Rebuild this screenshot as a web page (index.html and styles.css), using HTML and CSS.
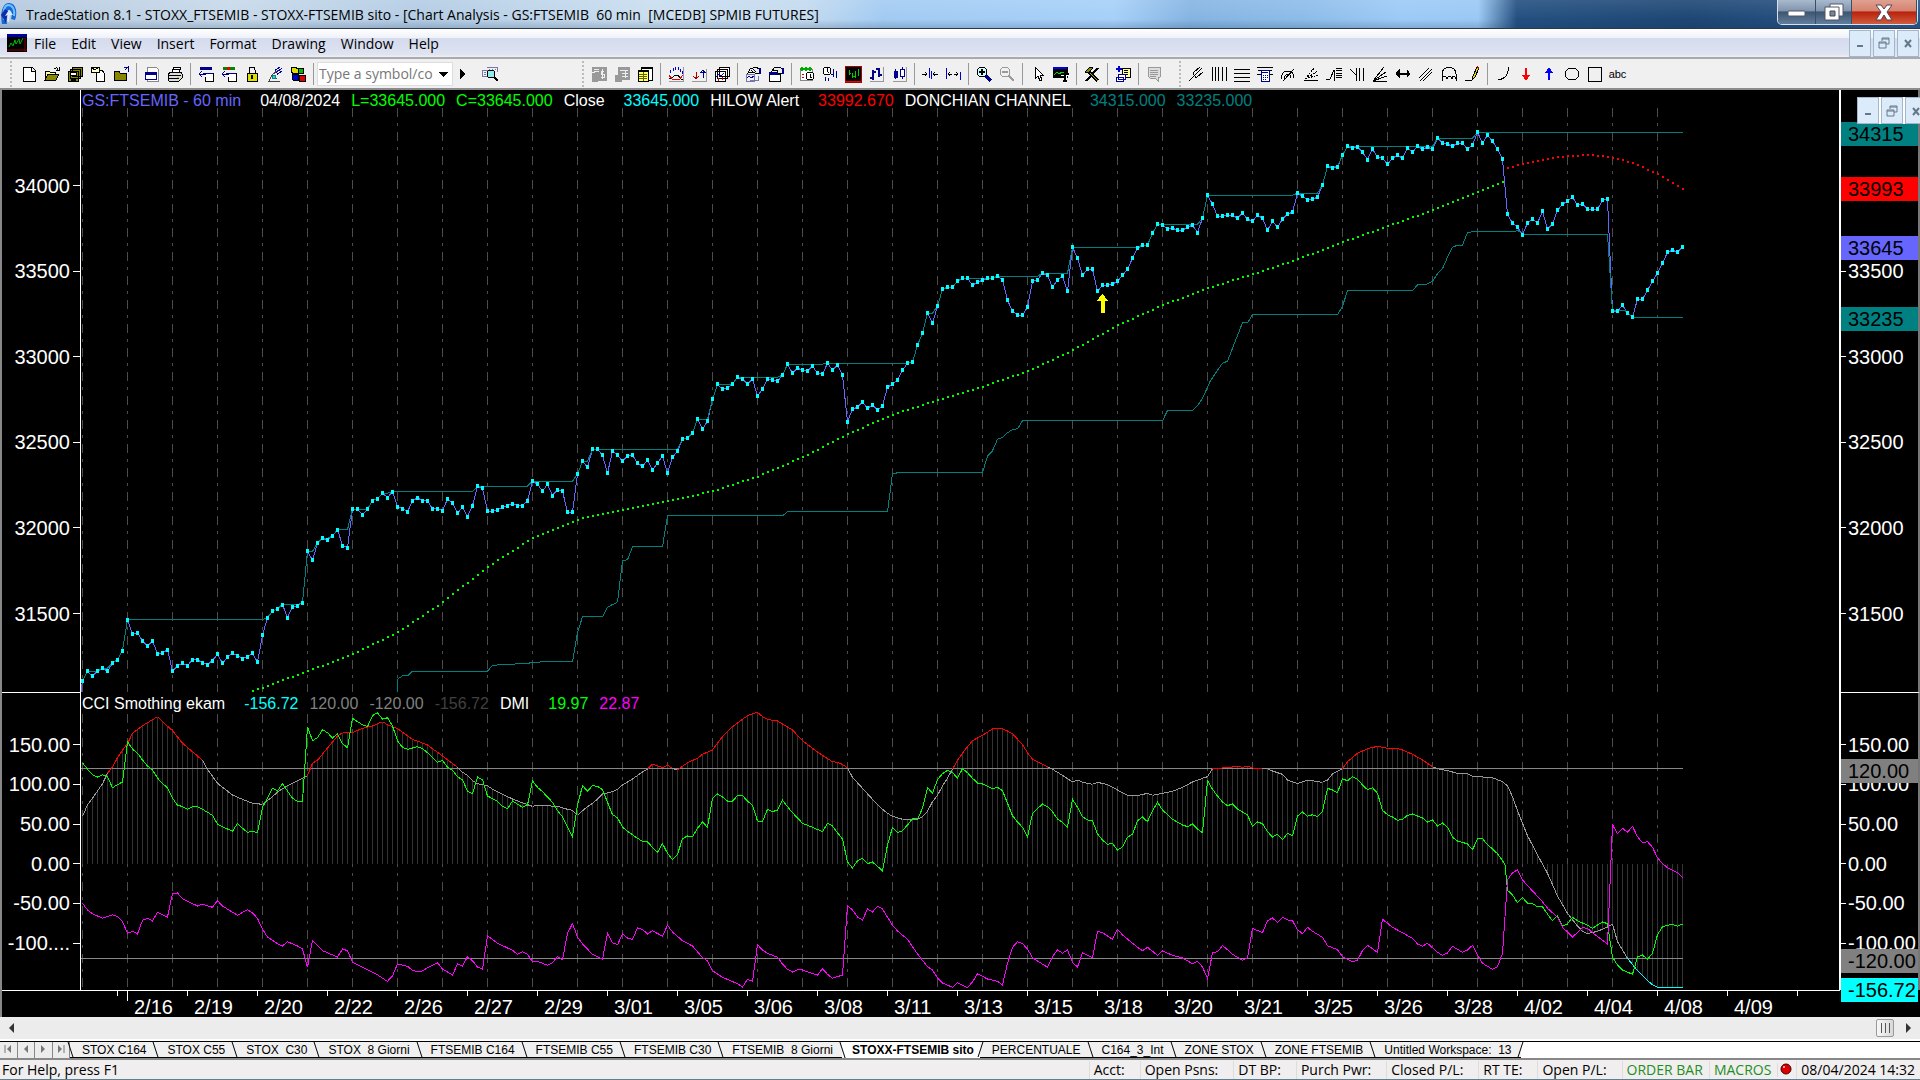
FILE: index.html
```html
<!DOCTYPE html>
<html lang="en">
<head>
    <meta charset="UTF-8">
    <meta name="viewport" content="width=device-width, initial-scale=1.0">
    <title>TradeStation 8.1 - STOXX_FTSEMIB</title>
    <link rel="stylesheet" href="styles.css">
</head>
<body>
    <header class="titlebar">
        <svg class="app-icon" viewBox="0 0 18 28"><path d="M2 24C0 14 2 4 8 3c8-1 10 9 7 17l-4-1c2-6 0-9-2-9-3 0-3 7-2 14z" fill="#1667d8"/><path d="M4 20C3 12 4 6 8 5c5 0 7 5 6 11" fill="none" stroke="#6fc0ff" stroke-width="2"/><path d="M1 15l4-6 3 2-2 12z" fill="#0a2fa8"/><path d="M9 10l4 5h-3l-1 7-2-1 1-6-3 1z" fill="#d8ecff"/></svg>
        <h1>TradeStation 8.1 - STOXX_FTSEMIB - STOXX-FTSEMIB sito - [Chart Analysis - GS:FTSEMIB&nbsp; 60 min&nbsp; [MCEDB] SPMIB FUTURES]</h1>
        <div class="window-buttons">
            <button class="win-min" aria-label="Minimize"><svg width="20" height="16" viewBox="0 0 20 16"><rect x="1" y="7" width="17" height="5" rx="1" fill="#fff" stroke="#556"/></svg></button>
            <button class="win-max" aria-label="Restore"><svg width="20" height="18" viewBox="0 0 20 18"><path d="M6 1h13v12H6z" fill="#fff" stroke="#556"/><path d="M1 4h14v13H1z" fill="#fff" stroke="#556"/><path d="M6 8h5v5H6z" fill="#789" stroke="#445"/></svg></button>
            <button class="win-close" aria-label="Close"><svg width="20" height="17" viewBox="0 0 20 17"><path d="M2 1h5l3 4 3-4h5l-5 7 5 8h-5l-3-5-3 5H2l5-8z" fill="#fff" stroke="#545"/></svg></button>
        </div>
    </header>

    <nav class="menubar">
        <svg class="doc-icon" width="20" height="18" viewBox="0 0 20 18"><path d="M0 0h20v18H0z"/><path d="M0 0h20v3H0z" fill="#00a"/><path d="M2 13l2-4 2 3 2-6 1 4 3-5 1 5 3-6" fill="none" stroke="#0b0"/><path d="M0 16h20M18 4v14" stroke="#800"/></svg>
        <button>File</button>
        <button>Edit</button>
        <button>View</button>
        <button>Insert</button>
        <button>Format</button>
        <button>Drawing</button>
        <button>Window</button>
        <button>Help</button>
        <div class="mdi-buttons">
            <button aria-label="Minimize chart"><svg width="14" height="14" viewBox="0 0 14 14"><path d="M4 10h6" stroke-width="2"/></svg></button>
            <button aria-label="Restore chart"><svg width="14" height="14" viewBox="0 0 14 14"><path d="M5 5V2h7v6H9M5 3h7M2 6h7v6H2zM2 7h7"/></svg></button>
            <button aria-label="Close chart"><svg width="14" height="14" viewBox="0 0 14 14"><path d="M4 4l6 7M10 4l-6 7" stroke-width="2"/></svg></button>
        </div>
    </nav>

    <div class="toolbar">
        <i class="grip"></i>
        <button aria-label="New"><svg viewBox="0 0 16 16"><path d="M2 1h9l3 3v11H2zM10 1v4h4" fill="#fff"/></svg></button>
        <button aria-label="Open"><svg viewBox="0 0 16 16"><path d="M1 14V5h4l1 1h5v3" fill="#ff9"/><path d="M10 3c2-2 4-1 4 1M12 4h3V1"/><path d="M1 14l3-6h11l-3 6z" fill="#880"/></svg></button>
        <button aria-label="Save all"><svg viewBox="0 0 16 16"><path d="M5 1h10v9H5zM3 3h10v9H3zM1 5h10v10H1z" fill="#880"/><path d="M3 6h6v3H3z" fill="#fff"/><path d="M4 12h4v3H4z" fill="#000"/></svg></button>
        <button aria-label="Mail"><svg viewBox="0 0 16 16"><path d="M6 4h6l2 3v8H6z" fill="#fff"/><path d="M1 1h8v5H1z" fill="#ffc"/><path d="M1 1l4 3 4-3"/></svg></button>
        <button aria-label="Close workspace"><svg viewBox="0 0 16 16"><path d="M1 14V5h5l1 2h6v7z" fill="#880"/><path d="M15 6V1l-3 3M15 1h-4" stroke="#008"/></svg></button>
        <i class="sep"></i>
        <button aria-label="Insert window"><svg viewBox="0 0 16 16"><path d="M3 1h9l2 2v12H3z" fill="#fff" stroke="#888"/><path d="M1 6h11v7H1z" fill="#fff" stroke="#008"/><path d="M1 7h11" stroke="#008" stroke-width="3"/></svg></button>
        <button aria-label="Print"><svg viewBox="0 0 16 16"><path d="M5 6l2-5h7l-2 5" fill="#fff"/><path d="M1 8l3-2h10l1 2v4l-3 3H2l-1-3z" fill="#ddd"/><path d="M1 9h13M2 12h10M7 3h5"/><path d="M10 11h2" stroke="#cc0"/></svg></button>
        <i class="sep"></i>
        <button aria-label="Symbol back"><svg viewBox="0 0 16 16"><path d="M2 2h12" stroke="#008" stroke-width="3"/><path d="M5 7h10v8H7v-4" fill="#fff"/><path d="M5 7h10M1 8h7M4 5L1 8l3 3" stroke="#008"/></svg></button>
        <button aria-label="Symbol forward"><svg viewBox="0 0 16 16"><path d="M2 2h12" stroke="#080" stroke-width="3"/><path d="M6 2h3" stroke="#e00" stroke-width="3"/><path d="M5 7h10v8H7v-4" fill="#fff"/><path d="M5 7h10M1 8h7M4 5L1 8l3 3" stroke="#008"/></svg></button>
        <button aria-label="Lock"><svg viewBox="0 0 16 16"><path d="M5 7V4c0-4 6-4 6 0v3"/><path d="M3 7h10v8H3z" fill="#dd0"/><path d="M8 9v4" stroke-width="2"/></svg></button>
        <button aria-label="Data network"><svg viewBox="0 0 16 16"><path d="M9 4l4-3M10 6l5-4M11 8l4-3M8 3l3 6" stroke="#00a"/><path d="M2 15l3-6 5 4M1 15h12M5 9l6-5" stroke="#444"/><path d="M5 9h3v3H5z" fill="#3cc" stroke="#088"/></svg></button>
        <button aria-label="Shapes"><svg viewBox="0 0 16 16"><path d="M1 2l4-1 3 2v4L4 8 1 6z" fill="#dd0"/><circle cx="11" cy="5" r="3" fill="#0b0"/><path d="M2 8h6v6H3z" fill="#00c"/><path d="M9 9h6v6H9z" fill="#d00"/></svg></button>
        <i class="sep"></i>
        <div class="symbol-box">
            <input type="text" aria-label="Symbol" placeholder="Type a symbol/co">
            <button aria-label="Symbol list"><svg viewBox="0 0 16 16"><path d="M3 6h10l-5 5z" fill="#000" stroke="none"/></svg></button>
        </div>
        <button class="narrow" aria-label="Go"><svg viewBox="0 0 16 16"><path d="M5 3l5 5-5 5z" fill="#000" stroke="none"/></svg></button>
        <button class="lookup" aria-label="Symbol lookup"><svg viewBox="0 0 18 16"><path d="M1 4h6v6H1zM6 1h10v5" stroke="#77a"/><path d="M8 3h1M11 3h1M14 3h1M3 6h2M3 8h2" stroke="#77a"/><circle cx="10" cy="8" r="4" fill="#8ee"/><path d="M13 11l4 4" stroke-width="2"/></svg></button>

        <i class="grip second"></i>
        <button aria-label="Buy"><svg viewBox="0 0 16 16"><path d="M1 1h14v13H6v1H1V7h3V5H1z" fill="#999" stroke="#999"/><path d="M13 5h-3v3h3v3h-3M11.500 3v10M3 3h5M3 5h5" stroke="#eee"/></svg></button>
        <button aria-label="Orders"><svg viewBox="0 0 16 16"><path d="M4 1h11v12H7v2H1V9h3z" fill="#999" stroke="#999"/><path d="M6 4h8M8 7h6M8 10h6M11 5v7" stroke="#eee"/></svg></button>
        <button aria-label="Positions"><svg viewBox="0 0 16 16"><path d="M4 1h11v13H4z" fill="#fff"/><path d="M1 4h10v11H1z" fill="#ff6"/><path d="M4 2h11M1 5h10" stroke-width="2"/><path d="M2 8h8M2 10h8M2 12h8M6 6v9" stroke="#660"/></svg></button>
        <i class="sep"></i>
        <button aria-label="Indicators"><svg viewBox="0 0 16 16"><path d="M15 1v14H1" stroke="#999"/><path d="M1 13l3-1 3-3h3l3 4 2 1"/><path d="M1 9l3 4 3 0 5 0 3-4" stroke="#d00"/><path d="M2 4v3M5 2v3M7 1v3M10 1v3M12 3v3M14 5v3" stroke="#00c"/></svg></button>
        <button aria-label="Strategies"><svg viewBox="0 0 16 16"><path d="M15 3v12H1" stroke="#999"/><path d="M5 6v7M2 10l3 3 3-3M3 11h4" stroke="#a00"/><path d="M12 12V4M9 7l3-3 3 3M10 6h4" stroke="#008"/></svg></button>
        <button aria-label="Chart windows"><svg viewBox="0 0 16 16"><path d="M5 1h10v9H5zM3 3h10v9H3zM1 5h10v10H1z" fill="#fff"/><path d="M2 11l3-3 2 2 3-3" stroke="#00c"/><path d="M4 12v3M8 11v3" stroke="#c00"/></svg></button>
        <i class="sep"></i>
        <button aria-label="Format analysis"><svg viewBox="0 0 16 16"><path d="M1 8h8v7H1zM13 10v4H5" stroke="#77a"/><path d="M2 12l2-2 2 2 3-2" stroke="#00a"/><path d="M3 7l2-4 6-2 3 2v4h-4L8 6z" fill="#eee"/><path d="M6 4l3 3M8 3l3 3"/><path d="M15 2v6" stroke="#008" stroke-width="2"/></svg></button>
        <button aria-label="Format window"><svg viewBox="0 0 16 16"><path d="M1 6h11v9H1z" fill="#fff"/><path d="M1 7h11" stroke="#008" stroke-width="3"/><path d="M4 5l2-3 6-1 2 2v4h-4L9 4z" fill="#eee"/><path d="M15 2v6" stroke="#008" stroke-width="2"/></svg></button>
        <i class="sep"></i>
        <button aria-label="Session"><svg viewBox="0 0 16 16"><path d="M1 3h12v11H1z" fill="#fff" stroke="#888"/><path d="M1 3h12M3 1v4M7 1v4M11 1v4" stroke="#0a0" stroke-width="2"/><path d="M3 8h2M3 11h2" stroke="#d00"/><circle cx="11" cy="10" r="4" fill="#fff"/><path d="M11 8v3h2"/></svg></button>
        <button aria-label="Interval"><svg viewBox="0 0 16 16"><circle cx="5" cy="5" r="4" fill="#fff"/><path d="M5 2v3l2 2"/><path d="M3 11v4M6 12v3M11 3v8M9 8h2M14 5v7M15 9h-1" stroke="#008"/></svg></button>
        <button aria-label="Bar style"><svg viewBox="0 0 16 16"><path d="M0 0h16v16H0z" fill="#000" stroke="#a00"/><path d="M4 4v5M7 7v5M10 5v7M13 3v7M4 7h2M8 10h2" stroke="#0c0"/><path d="M0 15h16" stroke="#e00"/></svg></button>
        <button aria-label="OHLC bars"><svg viewBox="0 0 16 16"><path d="M15 1v14H2" stroke="#999"/><path d="M5 4v10M11 2v9M2 12h3M8 3h3M5 6h3M11 9h3" stroke="#008" stroke-width="2"/></svg></button>
        <button aria-label="Candles"><svg viewBox="0 0 16 16"><path d="M15 1v14H2" stroke="#999"/><path d="M4 3v10M11 1v12" stroke="#008"/><path d="M3 5h3v6H3z" fill="#008" stroke="#008"/><path d="M9 3h4v7H9z" fill="#fff" stroke="#008"/></svg></button>
        <i class="sep"></i>
        <button aria-label="Compress"><svg viewBox="0 0 16 16"><path d="M0 8h5M3 6l2 2-2 2M16 8h-5M13 6l-2 2 2 2"/><path d="M7 2v10M9 5v8" stroke="#00c"/></svg></button>
        <button aria-label="Expand"><svg viewBox="0 0 16 16"><path d="M3 8h4M5 6L3 8l2 2M13 8H9M11 6l2 2-2 2"/><path d="M1 2v11M15 6v8" stroke="#00c"/></svg></button>
        <i class="sep"></i>
        <button aria-label="Zoom in"><svg viewBox="0 0 16 16"><circle cx="6" cy="6" r="5" fill="#cff"/><path d="M6 3v6M3 6h6" stroke-width="2"/><path d="M10 10l5 5" stroke="#008" stroke-width="3"/></svg></button>
        <button aria-label="Zoom out"><svg viewBox="0 0 16 16"><circle cx="6" cy="6" r="5" stroke="#999"/><path d="M3 6h6M10 10l5 5" stroke="#999" stroke-width="2"/></svg></button>
        <i class="sep"></i>
        <button aria-label="Pointer"><svg viewBox="0 0 16 16"><path d="M5 1v12l3-3 2 5 2-1-2-5h3z" fill="#fff"/></svg></button>
        <button aria-label="Chart text"><svg viewBox="0 0 16 16"><path d="M0 1h14v10H0z" fill="#000"/><path d="M0 2h14" stroke="#00e" stroke-width="2"/><path d="M1 9l3-3 2 2 3-2 3 2" stroke="#0d0"/><path d="M8 8h8M12 8v8M10 15h4" stroke="#fff" stroke-width="3"/><path d="M8 8h8M12 8v8M10 15h4" stroke-width="2"/></svg></button>
        <i class="sep"></i>
        <button aria-label="Tools"><svg viewBox="0 0 16 16"><path d="M2 15L14 2" stroke-width="2"/><path d="M5 6l9 9" stroke="#000" stroke-width="3"/><path d="M6 7l8 8" stroke="#aa0"/><path d="M1 6l5-5 3 1-5 5z" fill="#880"/></svg></button>
        <i class="sep"></i>
        <button aria-label="Add study"><svg viewBox="0 0 16 16"><path d="M4 0v6M1 3h6" stroke="#00c" stroke-width="2"/><path d="M7 2h8v9H7z" fill="#ff9"/><path d="M9 4h4M9 6h4M9 8h4"/><path d="M3 8h7v5H3zM1 11h7v4H1z" fill="#fff" stroke="#008"/></svg></button>
        <i class="sep"></i>
        <button aria-label="Notes"><svg viewBox="0 0 16 16"><path d="M2 1h12v10l-2 1v3l-3-3H4l-2-2z" fill="#ddd" stroke="#999"/><path d="M4 4h8M4 6h8M4 8h8M4 10h6" stroke="#999"/></svg></button>

        <i class="grip third"></i>
        <button aria-label="Andrews pitchfork"><svg viewBox="0 0 16 16"><path d="M1 15l8-8M5 7l7-6M8 12l7-6M5 7l3 5M9 7l5-5"/></svg></button>
        <button aria-label="Time lines"><svg viewBox="0 0 16 16"><path d="M1 1v14M4 1v14M7 1v14M11 1v14M15 1v14"/></svg></button>
        <button aria-label="Price lines"><svg viewBox="0 0 16 16"><path d="M0 3h16M0 7h16M0 11h16M0 15h16"/></svg></button>
        <button aria-label="Calculator"><svg viewBox="0 0 16 16"><path d="M0 1h16M1 4h14M0 8h16"/><path d="M4 4h8v11H4z" fill="#fff" stroke="#008"/><path d="M5 6h6M6 9h1M8 9h1M10 9h1M6 11h1M8 11h1M10 11h1M6 13h1M8 13h1" stroke="#008"/></svg></button>
        <button aria-label="Speed arcs"><svg viewBox="0 0 16 16"><path d="M1 13c0-5 3-8 7-8s6 3 6 7M4 13c0-3 2-5 4-5s3 1 3 4M3 15L14 3"/></svg></button>
        <button aria-label="Fan lines"><svg viewBox="0 0 16 16"><path d="M1 14h14"/><path d="M2 13L12 1M2 13l13-8M2 13l13-4" stroke-dasharray="2 1"/></svg></button>
        <button aria-label="Retracement"><svg viewBox="0 0 16 16"><path d="M0 13h4l4-9v11M10 2h6M10 4h6M10 7h6M10 9h6M10 11h6"/></svg></button>
        <button aria-label="Time retracement"><svg viewBox="0 0 16 16"><path d="M1 3l6 6M7 2v13M10 2v13M14 2v13"/></svg></button>
        <button aria-label="Gann fan"><svg viewBox="0 0 16 16"><path d="M1 15h14M1 15L12 1M1 15L14 6M1 15l14-5"/></svg></button>
        <button aria-label="Extended line"><svg viewBox="0 0 16 16"><path d="M1 8h14" stroke-width="2"/><path d="M4 4v7L1 8zM12 4v7l3-3z" fill="#000"/></svg></button>
        <button aria-label="Regression channel"><svg viewBox="0 0 16 16"><path d="M1 12L11 2M2 15L14 3M5 15l9-9"/></svg></button>
        <button aria-label="Cycle"><svg viewBox="0 0 16 16"><path d="M1 15V8c0-9 14-9 14 0v7M1 13c1-4 4-4 5 0 1-4 4-4 5 0 0-4 3-4 4 0"/></svg></button>
        <button aria-label="Pencil"><svg viewBox="0 0 16 16"><path d="M1 14h7"/><path d="M8 14l1-4 4-9 2 1-4 9z" fill="#dd0"/><path d="M13 1l2 1" stroke="#b00" stroke-width="2"/></svg></button>
        <i class="sep"></i>
        <button aria-label="Arc"><svg viewBox="0 0 16 16"><path d="M13 1c1 7-3 12-10 13"/></svg></button>
        <button aria-label="Down arrow"><svg viewBox="0 0 16 16"><path d="M8 2v10" stroke="#f00" stroke-width="2"/><path d="M4 9h8l-4 6z" fill="#f00" stroke="none"/></svg></button>
        <button aria-label="Up arrow"><svg viewBox="0 0 16 16"><path d="M8 4v10" stroke="#00f" stroke-width="2"/><path d="M4 7h8L8 1z" fill="#00f" stroke="none"/></svg></button>
        <button aria-label="Ellipse"><svg viewBox="0 0 16 16"><ellipse cx="8" cy="8" rx="7" ry="6"/></svg></button>
        <button aria-label="Rectangle"><svg viewBox="0 0 16 16"><path d="M1 1h13v14H1z"/></svg></button>
        <button class="abc">abc</button>
    </div>

    <main class="chart">
        <div class="mdi-buttons floating">
            <button aria-label="Minimize"><svg width="14" height="14" viewBox="0 0 14 14"><path d="M4 10h6" stroke-width="2"/></svg></button>
            <button aria-label="Restore"><svg width="14" height="14" viewBox="0 0 14 14"><path d="M5 5V2h7v6H9M5 3h7M2 6h7v6H2zM2 7h7"/></svg></button>
            <button aria-label="Close"><svg width="14" height="14" viewBox="0 0 14 14"><path d="M4 4l6 7M10 4l-6 7" stroke-width="2"/></svg></button>
        </div>

        <section class="pane price-pane">
            <ul class="axis left" id="price-left"></ul>
            <div class="plot">
                <p class="legend">
                    <span class="blue">GS:FTSEMIB - 60 min</span>
                    <span class="wide">04/08/2024</span>
                    <span class="green">L=33645.000</span>
                    <span class="green">C=33645.000</span>
                    <span>Close</span>
                    <span class="cyan wide">33645.000</span>
                    <span>HILOW Alert</span>
                    <span class="red wide">33992.670</span>
                    <span>DONCHIAN CHANNEL</span>
                    <span class="teal wide">34315.000</span>
                    <span class="teal">33235.000</span>
                </p>
                <svg id="price" viewBox="0 0 1758 603" preserveAspectRatio="none"></svg>
            </div>
            <ul class="axis right" id="price-right"></ul>
        </section>

        <section class="pane cci-pane">
            <ul class="axis left" id="cci-left"></ul>
            <div class="plot">
                <p class="legend">
                    <span>CCI Smothing ekam</span>
                    <span class="cyan wide">-156.72</span>
                    <span class="gray">120.00</span>
                    <span class="gray">-120.00</span>
                    <span class="dark">-156.72</span>
                    <span>DMI</span>
                    <span class="green wide">19.97</span>
                    <span class="magenta">22.87</span>
                </p>
                <svg id="cci" viewBox="0 0 1758 297" preserveAspectRatio="none"></svg>
            </div>
            <ul class="axis right" id="cci-right"></ul>
        </section>

        <ul class="dates" id="dates"></ul>
    </main>

    <div class="scrollbar">
        <button aria-label="Scroll left"><svg width="8" height="12" viewBox="0 0 8 12"><path d="M6 1v10L1 6z" fill="#333"/></svg></button>
        <button class="thumb" aria-label="Scroll thumb"><svg width="10" height="10" viewBox="0 0 10 10"><path d="M1.500 0v10M5.500 0v10M9.500 0v10" stroke="#555"/></svg></button>
        <button aria-label="Scroll right"><svg width="8" height="12" viewBox="0 0 8 12"><path d="M2 1v10l5-5z" fill="#333"/></svg></button>
    </div>

    <nav class="tabs">
        <div class="tab-nav">
            <button aria-label="First"><svg width="8" height="10" viewBox="0 0 8 10"><path d="M7 1v8L3 5z" fill="#777"/><path d="M1 1v8" stroke="#777"/></svg></button>
            <button aria-label="Previous"><svg width="8" height="10" viewBox="0 0 8 10"><path d="M6 1v8L2 5z" fill="#777"/></svg></button>
            <button aria-label="Next"><svg width="8" height="10" viewBox="0 0 8 10"><path d="M2 1v8l4-4z" fill="#777"/></svg></button>
            <button aria-label="Last"><svg width="8" height="10" viewBox="0 0 8 10"><path d="M1 1v8l4-4z" fill="#777"/><path d="M7 1v8" stroke="#777"/></svg></button>
        </div>
        <button class="tab">STOX C164</button>
        <button class="tab">STOX C55</button>
        <button class="tab">STOX&nbsp; C30</button>
        <button class="tab">STOX&nbsp; 8 Giorni</button>
        <button class="tab">FTSEMIB C164</button>
        <button class="tab">FTSEMIB C55</button>
        <button class="tab">FTSEMIB C30</button>
        <button class="tab">FTSEMIB&nbsp; 8 Giorni</button>
        <button class="tab active">STOXX-FTSEMIB sito</button>
        <button class="tab back">PERCENTUALE</button>
        <button class="tab">C164_3_Int</button>
        <button class="tab">ZONE STOX</button>
        <button class="tab">ZONE FTSEMIB</button>
        <button class="tab last">Untitled Workspace:&nbsp; 13</button>
    </nav>

    <footer class="status">
        <span class="help">For Help, press F1</span>
        <span>Acct:</span>
        <span>Open Psns:</span>
        <span>DT BP:</span>
        <span>Purch Pwr:</span>
        <span>Closed P/L:</span>
        <span>RT TE:</span>
        <span>Open P/L:</span>
        <span class="on">ORDER BAR</span>
        <span class="on">MACROS</span>
        <span class="led"><svg width="12" height="14" viewBox="0 0 12 14"><circle cx="6" cy="6" r="5" fill="#d00" stroke="#400"/><circle cx="4" cy="4" r="1" fill="#fcc"/></svg></span>
        <span>08/04/2024 14:32</span>
    </footer>

    <script src="script.js"></script>
</body>
</html>
```
FILE: styles.css
```css
* {
    box-sizing: border-box;
}
body {
    margin: 0;
    height: 100vh;
    display: flex;
    flex-direction: column;
    overflow: hidden;
    background-color: #f0f0f0;
    font-family: "Open Sans", "Noto Sans", sans-serif;
    font-size: 14px;
    color: #000;
}
button {
    margin: 0;
    padding: 0;
    border: none;
    background: none;
    font: inherit;
    color: inherit;
}
ul {
    list-style: none;
    margin: 0;
    padding: 0;
}

/* Title bar */
.titlebar {
    flex: none;
    height: 29px;
    display: flex;
    align-items: center;
    border-bottom: 1px solid #2a3a4a;
    background:
        linear-gradient(rgba(255, 255, 255, 0.1), rgba(255, 255, 255, 0) 70%, rgba(20, 50, 90, 0.2)),
        linear-gradient(90deg, #b4c9de 0%, #c7d9ea 12%, #b3cce4 22%, #c9deef 34%, #c3daef 42%, #a2cbf2 46%, #a6d0f9 58%, #85b4e2 62%, #8dbce9 68%, #9ccaf6 73%, #9ac8f4 77%, #234f80 79%, #1d4674 88%, #2a5788 100%);
}
.app-icon {
    width: 18px;
    height: 28px;
}
.titlebar h1 {
    flex: 1;
    margin: 0 0 0 8px;
    font-size: 14px;
    font-weight: normal;
    white-space: nowrap;
}
.window-buttons {
    align-self: flex-start;
    display: flex;
    height: 25px;
    margin-right: 2px;
    border: 1px solid #d5e2ee;
    border-top: none;
    border-radius: 0 0 5px 5px;
    overflow: hidden;
}
.window-buttons button {
    display: flex;
    align-items: center;
    justify-content: center;
    border-right: 1px solid #3b4e63;
    background: linear-gradient(#a9bace, #8094ad 45%, #3c5571 50%, #637e9c);
}
.win-min {
    width: 38px;
}
.win-max {
    width: 36px;
}
.window-buttons .win-close {
    width: 65px;
    background: linear-gradient(#e0a190, #d58370 45%, #b9220c 50%, #cf5c3e);
}

/* Menu */
.menubar {
    flex: none;
    height: 30px;
    display: flex;
    align-items: center;
    gap: 15px;
    padding-left: 7px;
    border-bottom: 2px solid #a9a9b0;
    background: linear-gradient(#fff, #eef1f8 33%, #d4dbed 34%, #dfe3f2 90%, #f0f0f0);
}
.doc-icon {
    margin-right: -8px;
}
.mdi-buttons {
    display: flex;
    gap: 2px;
    margin-left: auto;
    padding-right: 1px;
}
.mdi-buttons button {
    width: 22px;
    height: 27px;
    border: 1px solid #a3b6cb;
    background-color: #dcebf9;
}
.mdi-buttons svg {
    display: block;
    margin: auto;
    fill: none;
    stroke: #64788c;
}

/* Toolbar */
.toolbar {
    flex: none;
    height: 31px;
    display: flex;
    align-items: center;
    padding-left: 10px;
    border-bottom: 2px solid #8c8c8c;
    background-color: #f0f0f0;
    white-space: nowrap;
}
.toolbar > * {
    flex: none;
}
.toolbar > button {
    width: 23px;
    height: 26px;
}
.toolbar svg {
    display: block;
    width: 16px;
    height: 16px;
    margin: auto;
    fill: none;
    stroke: #000;
    shape-rendering: crispEdges;
    overflow: visible;
}
.grip {
    width: 7px;
    height: 26px;
    border-left: 2px dotted #bbb;
}
.grip.second {
    margin-left: 75px;
    width: 5px;
}
.grip.third {
    margin-left: 14px;
    width: 5px;
}
.sep {
    width: 8px;
    height: 22px;
    background: linear-gradient(#999, #999) 4px 0 / 1px 100% no-repeat;
}
.symbol-box {
    display: flex;
    align-items: center;
    width: 136px;
    height: 24px;
    background-color: #fff;
    border: 1px solid #ddd;
}
.symbol-box input {
    flex: 1;
    min-width: 0;
    padding: 0 0 0 1px;
    border: none;
    outline: none;
    background: none;
    font: inherit;
}
.symbol-box input::placeholder {
    color: #777;
}
.symbol-box button {
    width: 19px;
}
.toolbar .narrow {
    width: 19px;
}
.toolbar .lookup {
    width: 35px;
}
.lookup svg {
    width: 18px;
}
.toolbar .abc {
    font-family: "Liberation Sans", Arial, sans-serif;
    font-size: 11px;
}

/* Chart */
.chart {
    flex: 1;
    min-height: 0;
    display: flex;
    flex-direction: column;
    position: relative;
    background-color: #000;
    color: #fff;
    border-left: 2px solid #888;
    font-family: "Liberation Sans", Arial, sans-serif;
    font-size: 20px;
}
.floating {
    position: absolute;
    top: 7px;
    right: -8px;
    z-index: 3;
    background-color: #fff;
}
.pane {
    min-height: 0;
    display: grid;
    grid-template-columns: 79px 1fr 81px;
}
.price-pane {
    flex: 603;
}
.cci-pane {
    flex: 297;
}
.plot {
    position: relative;
    min-height: 0;
}
.plot > svg {
    position: absolute;
    width: 100%;
    height: 100%;
    overflow: visible;
    fill: none;
    shape-rendering: crispEdges;
}
.legend {
    position: absolute;
    top: 0;
    left: 1px;
    margin: 0;
    display: flex;
    gap: 11px;
    font-size: 16px;
    line-height: 22px;
    white-space: nowrap;
}
.wide {
    margin-left: 8px;
}
.axis {
    position: relative;
}
.price-pane .axis {
    border-bottom: 1px solid #fff;
}
.axis.left {
    border-right: 1px solid #fff;
}
.axis.right {
    border-left: 2px solid #fff;
    border-right: 2px solid #777;
}
.axis li {
    position: absolute;
    left: 0;
    right: 0;
    height: 24px;
    margin-top: -12px;
    line-height: 25px;
    white-space: nowrap;
}
.axis.left li {
    padding-right: 10px;
    text-align: right;
    background: linear-gradient(#fff, #fff) right center / 7px 1px no-repeat;
}
.axis.right li {
    padding-left: 7px;
    background: linear-gradient(#fff, #fff) left center / 5px 1px no-repeat;
}
.axis.right .tag {
    margin-top: -10px;
    background: #808080;
    color: #000;
    z-index: 2;
}
.axis.right .tag.teal-tag {
    background: #008080;
}
.axis.right .tag.red-tag {
    background: #f00;
}
.axis.right .tag.blue-tag {
    background: #66f;
}
.axis.right .tag.cyan-tag {
    background: #0ff;
}
.dates {
    flex: none;
    position: relative;
    height: 27px;
    margin-right: 80px;
    border-top: 1px solid #fff;
}
.dates li {
    position: absolute;
    top: 0;
    height: 5px;
    padding: 3px 0 0 6px;
    border-left: 1px solid #fff;
    line-height: 26px;
}
.dates .day-start {
    height: 10px;
}

.blue { color: #66f; }
.green { color: #0f0; }
.cyan { color: #0ff; }
.red { color: #f00; }
.teal { color: #008080; }
.gray { color: #808080; }
.dark { color: #404040; }
.magenta { color: #f0f; }

.grid { stroke: #4c4c4c; stroke-dasharray: 9 6 3 6; }
.close { stroke: #66f; }
.channel { stroke: #008080; }
.dots { fill: #0ff; }
.hilow-up { fill: #0f0; }
.hilow-down { fill: #f00; }
.signal { fill: #ff0; }
.bars { stroke: #333; }
.level { stroke: #888; }
.over { stroke: #f00; }
.mid { stroke: #999; }
.under { stroke: #0ff; }
.plus { stroke: #0f0; }
.minus { stroke: #f0f; }

/* Scrollbar */
.scrollbar {
    flex: none;
    height: 24px;
    display: flex;
    align-items: center;
    padding: 0 8px;
    border-bottom: 2px solid #fff;
    background-color: #ececec;
}
.scrollbar button {
    width: 8px;
}
.scrollbar svg {
    display: block;
    margin: auto;
}
.scrollbar .thumb {
    width: 18px;
    height: 18px;
    margin: 0 10px 0 auto;
    border: 1px solid #999;
    border-radius: 2px;
    background: linear-gradient(90deg, #f8f8f8, #d8d8d8);
}

/* Workspace tabs */
.tabs {
    flex: none;
    display: flex;
    height: 19px;
    border-top: 1px solid #000;
    border-bottom: 2px solid #888;
    background-color: #fff;
    font-family: "Liberation Sans", Arial, sans-serif;
    font-size: 12px;
}
.tab-nav {
    display: flex;
    width: 70px;
}
.tab-nav button {
    flex: 1;
    border-right: 1px solid #888;
    background-color: #ececec;
}
.tab {
    position: relative;
    padding: 0 9px 0 12px;
    background-color: #f0f0f0;
    border-bottom: 1px solid #000;
    white-space: nowrap;
}
.tab::before, .last::after {
    content: "";
    position: absolute;
    left: 0;
    top: 0;
    bottom: 0;
    border-left: 1px solid #000;
    transform: skewX(18deg);
}
.tab.back::before {
    transform: skewX(-18deg);
}
.last::after {
    left: auto;
    right: 0;
    transform: skewX(-18deg);
}
.tab.active {
    padding: 0 6px 0 10px;
    background-color: #fff;
    border-bottom: none;
    font-weight: bold;
}

/* Status bar */
.status {
    flex: none;
    height: 20px;
    display: flex;
    align-items: center;
    border-bottom: 1px solid #5d7f90;
    background-color: #f0eeee;
    line-height: 18px;
    white-space: nowrap;
}
.status span {
    padding: 0 15px 0 4px;
    border-left: 1px solid #ddd;
}
.status .help {
    margin-right: auto;
    padding-left: 2px;
    border: none;
}
.status .on {
    padding-right: 6px;
    color: #1e8f1e;
}
.status .led {
    padding: 0 4px 0 2px;
}
.status span:last-child {
    padding-right: 5px;
}
.led svg {
    display: block;
}
```
FILE: script.js
```js
const SVG = 'http://www.w3.org/2000/svg';
const STEP = 5;

// Closes, three units to a pixel, measured down from the top of the scale
const shift = (base, values) => values.map(v => base + v);
const closes = [
    ...shift(990, [
        720, 692, 707, 692, 683, 692, 668, 657, 630, 537, 581, 576, 602, 617, 600, 641, 638, 627,
        692, 675, 668, 675, 657, 657, 668, 672, 660, 641, 668, 650, 638, 645, 654, 650, 638, 665,
        584, 531, 512, 504, 492, 531, 500, 495, 486, 332, 359, 308, 293, 299, 287, 267, 315, 321,
        206, 206, 222, 206, 180, 174, 158, 171, 153, 198, 204, 213, 182, 171, 182, 180, 206, 204,
        210, 176, 188, 218, 200, 228, 195, 137, 143, 212, 212, 207, 200, 195, 191, 195, 195, 180,
        122, 131, 152, 131, 165, 147, 152, 215, 215
    ]),
    ...shift(480, [
        611, 572, 590, 536, 536, 554, 608, 542, 554, 572, 557, 554, 578, 587, 569, 599, 578, 557,
        608, 560, 542, 506, 503, 488, 446, 476, 452, 386, 341, 356, 352, 341, 320, 326, 341, 326,
        377, 356, 326, 329, 332, 314, 281, 308, 293, 299, 302, 287, 308, 311, 278, 299, 284, 314,
        453, 416, 410, 395, 413, 404, 419, 405, 350, 341, 329, 299, 278, 275, 224, 188, 128, 158,
        107, 56, 50, 50, 32, 23, 23, 44, 35, 29, 23, 23, 17, 27, 89, 122, 134, 134, 110, 32,
        29, 8, 14, 50, 29, 17, 62, -70, -37
    ]),
    494, 476, 476, 542, 524, 524, 521, 512, 494, 476, 443, 413, 404, 404, 368, 341, 344, 356,
    353, 359, 359, 350, 344, 366, 323, 254, 281, 317, 317, 314, 314, 323, 308, 326, 332, 314,
    323, 359, 332, 350, 326, 311, 305, 248, 257, 269, 266, 260, 224, 167, 173, 170, 134, 107,
    113, 110, 125, 147, 116, 140, 143, 161, 143, 134, 143, 113, 125, 107, 116, 110, 116, 83,
    98, 101, 107, 98, 98, 116, 104, 65, 98, 74, 92, 116, 146, 311, 338, 350, 372, 338, 326,
    338, 302, 356, 341, 299, 281, 272, 260, 284, 281, 296, 296, 296, 269, 266, 602, 602, 584,
    608, 620, 566, 566, 539, 512, 488, 458, 425, 419, 425, 410
];

// The other series are [bar, level] pairs
const lower = [[63, 1745], [63, 1706], [64, 1696], [65, 1696], [66, 1682], [81, 1682], [82, 1664], [85, 1662], [89, 1658], [92, 1654], [98, 1654], [99, 1567], [100, 1519], [104, 1519], [105, 1490], [106, 1482], [107, 1476], [108, 1350], [109, 1348], [110, 1309], [116, 1309], [117, 1216], [140, 1216], [141, 1204], [161, 1204], [162, 1090], [163, 1087], [180, 1087], [181, 1037], [182, 1021], [183, 986], [184, 981], [185, 967], [186, 957], [187, 955], [188, 931], [216, 931], [217, 900], [222, 900], [223, 885], [224, 864], [225.5, 813], [227, 779], [228, 758], [229, 752], [230, 713], [231, 675], [232, 637], [233, 637], [234, 613], [251, 613], [252, 587], [253, 541], [266, 541], [267, 523], [268.5, 523], [270, 512], [271, 490], [272, 475], [273, 440], [274, 410], [275, 404], [276, 404], [277, 366], [278, 364], [286.5, 364], [287, 359], [288, 371], [305, 371], [306, 602], [307, 600], [308.5, 600], [310, 620], [320, 620]];
const hilowUp = [[34, 1742], [45, 1682], [54, 1631], [63, 1565], [72, 1475], [81, 1369], [90, 1282], [99, 1227], [108, 1197], [117, 1172], [126, 1142], [135, 1098], [144, 1040], [153, 971], [162, 912], [171, 869], [180, 828], [189, 782], [198, 719], [207, 644], [216, 584], [225, 533], [234, 491], [243, 446], [252, 395], [261, 347], [270, 299], [279, 245], [284, 215]];
const hilowDown = [[285, 173], [288, 159], [291, 150], [294, 141], [297, 137], [300, 134], [303, 135], [306, 141], [309, 153], [312, 170], [315, 191], [318, 216], [320, 234]];

const cci = [[0, 379], [1, 345], [2, 325], [3, 303], [4, 281], [5, 250], [6, 231], [7, 203], [8, 181], [9, 161], [10, 130], [12, 107], [13, 98], [15, 80], [16, 95], [18, 122], [20, 160], [22, 185], [24, 211], [25, 238], [27, 280], [30, 315], [31, 322], [34, 340], [36, 343], [38, 320], [39, 306], [41, 287], [44, 265], [45, 257], [46, 220], [47, 211], [49, 174], [51, 138], [52, 128], [54, 128], [56, 115], [58, 108], [60, 95], [61, 104], [63, 116], [66, 148], [69, 165], [72, 198], [75, 232], [76, 247], [77, 256], [78, 272], [79, 281], [81, 287], [82, 298], [86, 327], [89, 344], [90, 349], [91, 346], [95, 349], [97, 358], [98, 361], [99, 376], [100.5, 355], [102.5, 335], [104, 312], [106, 305], [107, 298], [108, 285], [110, 267], [112, 246], [113, 238], [114, 222], [116, 233], [117, 226], [118, 235], [119, 240], [121, 218], [123, 205], [124, 193], [126, 180], [128, 140], [130, 110], [133, 77], [134, 71], [135, 67], [136, 80], [137, 88], [139, 93], [142, 120], [144, 152], [147, 186], [149, 206], [150, 215], [151.5, 218], [153, 234], [154, 262], [156, 295], [158, 328], [160, 358], [161, 370], [162, 379], [164, 388], [167, 388], [168, 380], [169, 364], [170, 335], [171, 316], [172, 288], [173, 264], [174, 238], [175, 211], [176, 190], [177, 170], [178, 152], [180, 136], [182, 117], [183, 114], [184, 116], [185, 123], [186, 131], [188, 164], [189, 188], [190, 208], [192, 223], [194, 238], [196, 256], [198, 276], [199, 270], [200, 277], [202, 283], [203, 277], [205, 284], [207, 300], [209, 316], [211, 317], [213, 310], [214, 316], [216, 310], [218, 304], [220, 292], [222, 276], [224, 265], [225, 260], [226, 236], [229, 233], [231, 229], [232, 232], [233, 228], [234, 234], [237, 236], [238, 243], [240, 253], [241, 270], [243, 281], [245, 270], [248, 277], [249, 270], [250, 252], [252, 236], [253, 215], [255, 190], [257, 176], [259, 169], [261, 175], [263, 176], [264, 180], [266, 193], [268, 210], [270, 230], [271, 236], [273, 242], [275, 250], [277, 251], [278, 259], [282, 263], [284, 275], [285, 288], [286, 320], [287, 362], [289, 437], [291, 495], [293, 550], [295, 618], [297, 670], [299, 708], [300, 724], [301, 731], [303, 724], [305, 711], [306, 703], [307, 755], [309, 805], [311, 842], [313, 872], [314.5, 890], [316, 894], [318, 892], [320, 892]];
const plus = [[0, 218], [1, 238], [2, 254], [3, 261], [4, 254], [5, 260], [6, 293], [7, 284], [8, 276], [9, 155], [10, 177], [11, 190], [12, 210], [13, 228], [14, 240], [15, 264], [16, 281], [17, 293], [18, 325], [19, 345], [20, 350], [21, 358], [22, 350], [23, 350], [24, 358], [26, 376], [27, 402], [28, 410], [30, 424], [31, 400], [32, 415], [33, 427], [34, 424], [35, 428], [36, 352], [38, 295], [39, 303], [40, 281], [42, 325], [43, 334], [44, 334], [45, 110], [46, 152], [47, 143], [48, 119], [49, 128], [50, 144], [51, 131], [52, 161], [53, 173], [54, 85], [55, 95], [56, 104], [57, 110], [58, 77], [59, 68], [60, 88], [61, 83], [62, 108], [63, 152], [64, 172], [65, 178], [67, 170], [68, 176], [69, 188], [71, 217], [72, 211], [73, 232], [74, 241], [75, 260], [76, 270], [77, 303], [78, 311], [79, 261], [80, 269], [81, 318], [83, 334], [84, 349], [85, 356], [86, 333], [88, 352], [89, 345], [90, 272], [91, 292], [92, 305], [94, 337], [95, 362], [96, 380], [97, 410], [98, 440], [99, 346], [100, 287], [101, 303], [102, 287], [103, 289], [104, 299], [105, 337], [106, 374], [107, 383], [108, 411], [109, 424], [111, 445], [112, 454], [113, 456], [114, 472], [115, 487], [116, 461], [117, 490], [118, 509], [119, 493], [120, 446], [121, 438], [122, 441], [123, 415], [124, 396], [125, 412], [126, 325], [127, 312], [128, 321], [129, 333], [130, 333], [131, 317], [132, 317], [133, 333], [134, 346], [135, 393], [136, 394], [137, 358], [138, 365], [139, 360], [140, 331], [141, 350], [142, 368], [144, 400], [146, 412], [148, 425], [149, 400], [150, 408], [151, 428], [152, 447], [153, 516], [154, 534], [155, 512], [156, 505], [157, 521], [158, 516], [159, 529], [160, 543], [161, 465], [162, 412], [163, 428], [164, 422], [165, 405], [166, 386], [167, 387], [168, 355], [169, 293], [170, 309], [171, 269], [172, 251], [173, 241], [174, 248], [175, 264], [176, 236], [177, 248], [178, 265], [179, 279], [180, 282], [182, 296], [183, 292], [184, 302], [185, 340], [186, 377], [187, 396], [188, 412], [189, 442], [190, 370], [192, 342], [193, 350], [194, 365], [195, 387], [196, 397], [197, 412], [198, 328], [199, 352], [200, 380], [201, 390], [202, 392], [203, 432], [204, 450], [205, 463], [206, 460], [207, 481], [208, 470], [209, 442], [210, 433], [211, 392], [212, 381], [213, 395], [214, 362], [215, 337], [216, 360], [218, 388], [220, 405], [221, 410], [222, 402], [223, 417], [224, 428], [225, 272], [226, 298], [227, 318], [228, 336], [229, 347], [230, 342], [231, 357], [233, 375], [234, 409], [235, 396], [236, 401], [237, 425], [238, 441], [239, 433], [240, 449], [241, 430], [242, 437], [243, 378], [244, 366], [245, 379], [246, 374], [247, 380], [248, 364], [249, 295], [250, 300], [251, 308], [252, 267], [253, 272], [254, 260], [255, 268], [256, 285], [257, 299], [258, 293], [259, 310], [260, 361], [261, 374], [262, 381], [263, 391], [264, 388], [265, 376], [266, 372], [268, 384], [269, 396], [270, 390], [271, 408], [272, 399], [273, 412], [274, 442], [275, 453], [276, 457], [277, 462], [278, 479], [279, 447], [280, 446], [281, 464], [282, 477], [283, 491], [284, 512], [284.5, 525], [285, 601], [286, 615], [287, 638], [288, 623], [289, 639], [290, 641], [291, 650], [292, 650], [293, 672], [294, 692], [295, 677], [296, 709], [297, 702], [298, 682], [299, 692], [301, 706], [302, 715], [303, 705], [304, 696], [305, 701], [306, 802], [307, 825], [308, 840], [310, 853], [311, 801], [312, 795], [313, 808], [314, 790], [315, 734], [316, 710], [317, 706], [318, 703], [319, 709], [320, 702]];
const minus = [[0, 640], [1, 660], [2, 671], [4, 685], [6, 674], [7, 680], [8, 695], [9, 730], [10, 724], [11, 732], [12, 691], [13, 685], [14, 693], [15, 667], [17, 681], [18, 610], [19, 609], [20, 626], [23, 648], [24, 643], [26, 652], [27, 632], [28, 648], [31, 676], [33, 659], [34, 669], [35, 685], [36, 718], [37, 741], [39, 761], [40, 768], [41, 755], [43, 768], [44, 777], [45, 832], [46, 751], [48, 782], [51, 801], [52, 777], [53, 782], [54, 817], [59, 854], [60, 865], [61, 874], [62, 858], [63, 822], [65, 829], [66, 841], [67, 845], [68, 843], [69, 833], [71, 818], [72, 837], [74, 855], [75, 822], [76, 828], [77, 800], [78, 812], [79, 831], [80, 838], [81, 737], [83, 760], [86, 781], [87, 793], [88, 785], [89, 793], [90, 815], [91, 814], [93, 826], [94, 818], [95, 800], [96, 809], [97, 730], [98, 701], [99, 741], [100, 762], [102, 793], [104, 808], [105, 730], [106, 758], [107, 764], [108, 732], [109, 744], [110, 748], [111, 714], [112, 718], [113, 732], [114, 722], [116, 739], [117, 706], [118, 726], [120, 752], [122, 768], [124, 803], [125, 812], [126, 842], [128, 862], [131, 881], [132, 891], [133, 868], [134, 874], [135, 764], [136, 780], [137, 790], [139, 802], [140, 822], [141, 838], [142, 846], [143, 839], [144, 840], [147, 856], [148, 836], [149, 853], [150, 865], [152, 855], [153, 647], [154, 660], [155, 681], [156, 690], [157, 657], [158, 666], [159, 649], [160, 657], [162, 706], [163, 723], [165, 748], [167, 792], [169, 830], [170, 840], [171, 864], [172, 879], [174, 892], [175, 878], [177, 893], [178, 876], [179, 851], [181, 867], [183, 874], [184, 885], [185, 820], [186, 772], [187, 755], [188, 761], [189, 777], [190, 803], [191, 813], [193, 832], [194, 800], [195, 779], [196, 790], [197, 779], [198, 818], [199, 831], [200, 788], [202, 803], [203, 724], [204, 728], [206, 748], [207, 718], [208, 735], [211, 772], [212, 782], [213, 772], [215, 796], [216, 783], [218, 796], [220, 804], [222, 821], [223, 814], [224, 831], [225, 865], [226, 789], [227, 785], [228, 767], [229, 779], [230, 793], [232, 811], [233, 803], [234, 715], [236, 728], [237, 692], [238, 684], [239, 697], [240, 682], [241, 690], [242, 692], [243, 719], [244, 731], [245, 712], [246, 724], [248, 742], [249, 767], [251, 779], [252, 800], [254, 815], [255, 811], [256, 782], [257, 766], [259, 787], [260, 688], [262, 712], [266, 745], [267, 762], [268, 769], [269, 760], [271, 787], [272, 796], [273, 789], [274, 769], [276, 787], [277, 780], [278, 766], [279, 795], [280, 820], [282, 838], [283, 830], [284, 790], [285, 570], [286, 548], [287, 540], [288, 570], [290, 603], [292, 635], [293, 655], [295, 682], [296, 712], [298, 741], [300, 713], [301, 715], [302, 728], [305, 762], [306, 404], [307, 431], [308, 415], [309, 427], [310, 409], [311, 440], [312, 458], [313, 455], [314, 472], [315, 503], [316, 521], [317, 533], [319, 548], [320, 563]];

const x = bar => 1.5 + bar * STEP;
const priceY = v => 20.5 + v / 3;
const cciY = v => v / 3 - 3;

function addPath(svg, cls, d) {
    const path = document.createElementNS(SVG, 'path');
    path.setAttribute('class', cls);
    path.setAttribute('d', d);
    svg.appendChild(path);
}

function line(points, y) {
    return 'M' + points.map(p => x(p[0]) + ' ' + y(p[1]).toFixed(1)).join('L');
}

// One value for every bar between the first and the last pair
function fill(points) {
    const out = [];
    for (let i = 1; i < points.length; i++) {
        const [a, va] = points[i - 1];
        const [b, vb] = points[i];
        for (let bar = Math.ceil(a); bar < b; bar++) {
            out.push([bar, va + (vb - va) * (bar - a) / (b - a)]);
        }
    }
    out.push(points[points.length - 1]);
    return out;
}

function squares(points, y, w, h) {
    return points.map(p => `M${x(p[0]) - w / 2} ${Math.round(y(p[1]) - h / 2)}h${w}v${h}h${-w}z`).join('');
}

function grid(svg, top, bottom) {
    let d = '';
    for (let bar = 0; bar <= 315; bar += 9) {
        d += `M${x(bar)} ${top}V${bottom}`;
    }
    addPath(svg, 'grid', d);
}

// Price pane
const price = document.getElementById('price');
const closePoints = closes.map((v, i) => [i, v]);
let high = Infinity;
const upper = closes.map((v, i) => [i, high = Math.min(high, v)]);
grid(price, 18, 602);
addPath(price, 'close', line([[-0.3, 1745], ...closePoints], priceY));
addPath(price, 'channel', line(upper, priceY));
addPath(price, 'channel', line(lower, priceY));
addPath(price, 'hilow-up', squares(fill(hilowUp), priceY, 2, 2));
addPath(price, 'hilow-down', squares(fill(hilowDown), priceY, 2, 2));
addPath(price, 'dots', squares(closePoints, priceY, 3, 4));
addPath(price, 'signal', 'M1021.500 204l6 7h-4v12h-4v-12h-4z');

// CCI / DMI pane
const lowerPane = document.getElementById('cci');
const cciBars = fill(cci);
grid(lowerPane, 21, 294);
addPath(lowerPane, 'bars', cciBars.map(p => `M${x(p[0])} ${cciY(521)}V${cciY(p[1])}`).join(''));
addPath(lowerPane, 'level', `M0 ${cciY(235.5)}H${x(320)}M0 ${cciY(805.5)}H${x(320)}`);
for (let i = 1; i < cciBars.length; i++) {
    const v = cciBars[i][1];
    const cls = v < 236 ? 'over' : v > 805 ? 'under' : 'mid';
    addPath(lowerPane, cls, line([cciBars[i - 1], cciBars[i]], cciY));
}
addPath(lowerPane, 'plus', line(plus, cciY));
addPath(lowerPane, 'minus', line(minus, cciY));

// Axes
function addLabel(id, text, percent, side, cls) {
    const li = document.createElement('li');
    li.textContent = text;
    li.style[side] = percent + '%';
    if (cls) li.className = cls;
    document.getElementById(id).appendChild(li);
}

const priceTop = p => (95.9 + (34000 - p) * 0.1714) / 603 * 100;
const cciTop = v => (170.7 - v * 0.793) / 297 * 100;

for (let p = 34000; p >= 31500; p -= 500) {
    addLabel('price-left', p, priceTop(p), 'top');
    addLabel('price-right', p, priceTop(p), 'top');
}
addLabel('price-right', '34315', priceTop(34315), 'top', 'tag teal-tag');
addLabel('price-right', '33993', priceTop(33993), 'top', 'tag red-tag');
addLabel('price-right', '33645', priceTop(33645), 'top', 'tag blue-tag');
addLabel('price-right', '33235', priceTop(33235), 'top', 'tag teal-tag');

for (let v = 150; v >= -100; v -= 50) {
    addLabel('cci-left', v === -100 ? '-100....' : v.toFixed(2), cciTop(v), 'top');
    addLabel('cci-right', v.toFixed(2), cciTop(v), 'top');
}
addLabel('cci-right', '120.00', cciTop(120), 'top', 'tag');
addLabel('cci-right', '-120.00', cciTop(-120), 'top', 'tag');
addLabel('cci-right', '-156.72', cciTop(-156.72), 'top', 'tag cyan-tag');

const days = ['2/19', '2/20', '2/22', '2/26', '2/27', '2/29', '3/01', '3/05', '3/06', '3/08', '3/11', '3/13',
    '3/15', '3/18', '3/20', '3/21', '3/25', '3/26', '3/28', '4/02', '4/04', '4/08', '4/09', ''];
const axisWidth = 1838;
addLabel('dates', '', 115 / axisWidth * 100, 'left');
addLabel('dates', '2/16', 125 / axisWidth * 100, 'left', 'day-start');
days.forEach((day, i) => addLabel('dates', day, (185 + i * 70) / axisWidth * 100, 'left'));
```
